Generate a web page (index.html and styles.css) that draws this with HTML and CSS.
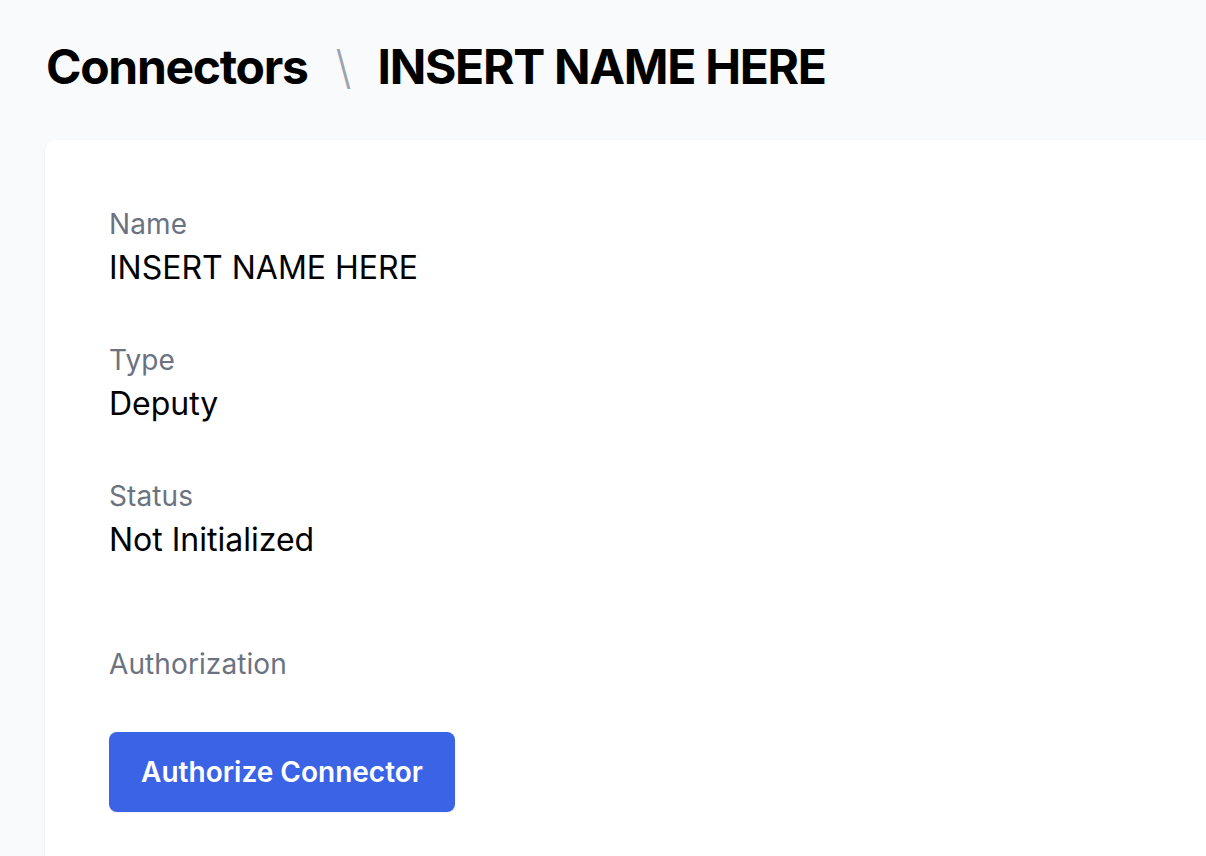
FILE: index.html
```html
<!DOCTYPE html>
<html>
<head>
<meta charset="utf-8">
<link rel="stylesheet" href="styles.css">
</head>
<body>
<div class="page">
  <h1 class="title">
    <span>Connectors</span>
    <span class="sep">\</span>
    <span>INSERT NAME HERE</span>
  </h1>
  <div class="card">
    <div class="field">
      <div class="label">Name</div>
      <div class="value">INSERT NAME HERE</div>
    </div>
    <div class="field">
      <div class="label">Type</div>
      <div class="value">Deputy</div>
    </div>
    <div class="field">
      <div class="label">Status</div>
      <div class="value">Not Initialized</div>
    </div>
    <div class="auth">
      <div class="label">Authorization</div>
      <button class="btn">Authorize Connector</button>
    </div>
  </div>
</div>
</body>
</html>
```

FILE: styles.css
```css
html, body {
  margin: 0;
  padding: 0;
  background: #f9fafb;
  font-family: Inter, "Noto Sans", sans-serif;
  height: 100%;
  overflow: hidden;
}
.page {
  padding: 37px 0 0 46px;
  box-sizing: border-box;
  height: 100vh;
  display: flex;
  flex-direction: column;
}
.title {
  margin: 0;
  height: 60px;
  display: flex;
  align-items: center;
  font-size: 48px;
  line-height: 60px;
  font-weight: 700;
  letter-spacing: -1.3px;
  color: #000;
}
.sep {
  color: #9ca3af;
  font-weight: 300;
  font-size: 46px;
  margin: 0 26px 0 28px;
  letter-spacing: 0;
}
.card {
  flex: 1;
  margin-top: 43px;
  margin-left: -1px;
  background: #fff;
  border-top-left-radius: 10px;
  box-shadow: 0 1px 3px rgba(0,0,0,0.06), 0 1px 2px rgba(0,0,0,0.03);
  padding: 62px 0 0 64px;
}
.field {
  margin-bottom: 48px;
}
.label {
  font-size: 28px;
  line-height: 44px;
  color: #6b7280;
  letter-spacing: 0.1px;
}
.value {
  font-size: 32px;
  line-height: 44px;
  color: #000;
}
.auth {
  margin-top: 80px;
}
.auth .label {
  margin-bottom: 46px;
}
.btn {
  display: block;
  width: 346px;
  height: 80px;
  border: none;
  border-radius: 8px;
  background: #3b63e5;
  color: #fff;
  font-family: Inter, "Noto Sans", sans-serif;
  font-size: 28px;
  font-weight: 600;
  box-shadow: 0 1px 2px rgba(0,0,0,0.05);
  padding: 0;
}
```
